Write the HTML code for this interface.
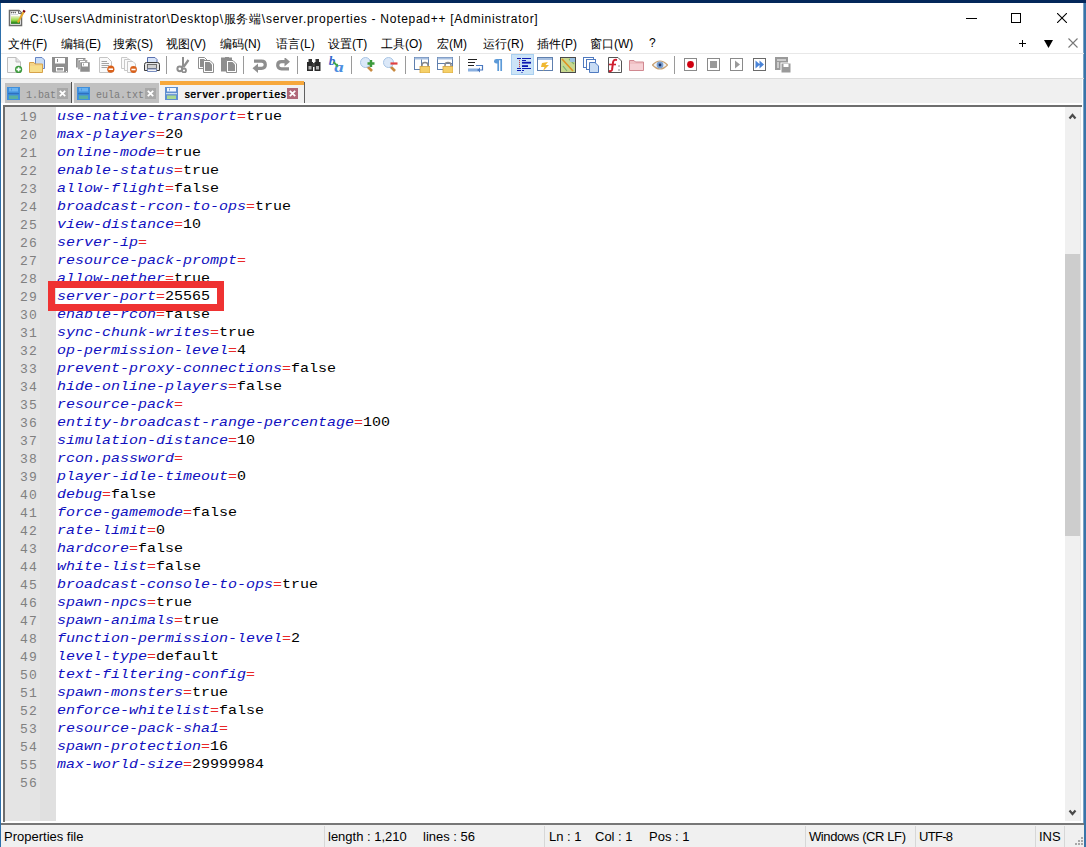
<!DOCTYPE html>
<html><head><meta charset="utf-8">
<style>
*{margin:0;padding:0;box-sizing:border-box}
html,body{width:1086px;height:847px;overflow:hidden;background:#fff;position:relative;font-family:"Liberation Sans",sans-serif}
.a{position:absolute}
.mi{position:absolute;top:36px;font-size:12px;color:#000;white-space:nowrap}
.ln{position:absolute;left:5px;width:33px;text-align:right;font-family:"Liberation Mono",monospace;font-size:13px;letter-spacing:1.2px;line-height:18px;height:18px;color:#808080}
.cl{position:absolute;left:57px;font-family:"Liberation Mono",monospace;font-size:15px;transform:scaleY(0.84);transform-origin:0 0;line-height:18px;height:18px;color:#000;white-space:pre}
.cl i{color:#1010c0;font-style:italic}
.cl b{color:#e82828;font-weight:normal}
.tt{position:absolute;top:90px;font-family:"Liberation Mono",monospace;font-size:10px;letter-spacing:0px;white-space:nowrap}
.st{position:absolute;top:829px;font-size:13px;color:#000;white-space:nowrap}
.sep{position:absolute;top:826px;width:1px;height:21px;background:#d7d7d7}
</style></head><body>
<!-- window frame -->
<div class="a" style="left:0;top:0;width:1086px;height:3px;background:#03275a"></div>
<div class="a" style="left:0;top:3px;width:1px;height:844px;background:#2d6fab"></div>
<div class="a" style="left:1083px;top:3px;width:1px;height:844px;background:#7aa2c6"></div><div class="a" style="left:1084px;top:3px;width:2px;height:844px;background:#3a74a8"></div>
<!-- title -->
<div class="a" id="title" style="left:30px;top:11px;font-size:12px;letter-spacing:0.72px;white-space:nowrap;color:#000">C:\Users\Administrator\Desktop\服务端\server.properties - Notepad++ [Administrator]</div>
<!-- menu -->
<div class="mi" style="left:8px">文件(F)</div><div class="mi" style="left:61px">编辑(E)</div><div class="mi" style="left:113px">搜索(S)</div><div class="mi" style="left:166px">视图(V)</div><div class="mi" style="left:220px">编码(N)</div><div class="mi" style="left:276px">语言(L)</div><div class="mi" style="left:328px">设置(T)</div><div class="mi" style="left:381px">工具(O)</div><div class="mi" style="left:437px">宏(M)</div><div class="mi" style="left:483px">运行(R)</div><div class="mi" style="left:537px">插件(P)</div><div class="mi" style="left:590px">窗口(W)</div><div class="mi" style="left:649px">?</div>
<div class="a" style="left:1px;top:53px;width:1083px;height:1px;background:#e8e8e8"></div>
<!-- toolbar -->
<div class="a" style="left:1px;top:78px;width:1083px;height:1px;background:#dcdcdc"></div>
<div class="a" style="left:1px;top:79px;width:1081px;height:24px;background:#f0f0f0"></div>
<!-- editor frame -->
<div class="a" style="left:3px;top:105px;width:1079px;height:2px;background:#6e6e6e"></div>
<div class="a" style="left:3px;top:105px;width:2px;height:717px;background:#6e6e6e"></div>
<div class="a" style="left:5px;top:107px;width:35px;height:714px;background:#e4e4e4"></div>
<div class="a" style="left:40px;top:107px;width:16px;height:714px;background:#e0e0e0"></div>
<!-- scrollbar -->
<div class="a" style="left:1065px;top:107px;width:16px;height:714px;background:#f0f0f0"></div>
<div class="a" style="left:1065px;top:254px;width:15px;height:282px;background:#cdcdcd"></div>
<div class="a" style="left:1080px;top:107px;width:1px;height:714px;background:#e6e6e6"></div>
<div class="ln" style="top:109px">19</div><div class="ln" style="top:127px">20</div><div class="ln" style="top:145px">21</div><div class="ln" style="top:163px">22</div><div class="ln" style="top:181px">23</div><div class="ln" style="top:199px">24</div><div class="ln" style="top:217px">25</div><div class="ln" style="top:235px">26</div><div class="ln" style="top:253px">27</div><div class="ln" style="top:271px">28</div><div class="ln" style="top:289px">29</div><div class="ln" style="top:307px">30</div><div class="ln" style="top:325px">31</div><div class="ln" style="top:343px">32</div><div class="ln" style="top:361px">33</div><div class="ln" style="top:379px">34</div><div class="ln" style="top:397px">35</div><div class="ln" style="top:415px">36</div><div class="ln" style="top:433px">37</div><div class="ln" style="top:451px">38</div><div class="ln" style="top:469px">39</div><div class="ln" style="top:487px">40</div><div class="ln" style="top:505px">41</div><div class="ln" style="top:523px">42</div><div class="ln" style="top:541px">43</div><div class="ln" style="top:559px">44</div><div class="ln" style="top:577px">45</div><div class="ln" style="top:595px">46</div><div class="ln" style="top:613px">47</div><div class="ln" style="top:631px">48</div><div class="ln" style="top:649px">49</div><div class="ln" style="top:667px">50</div><div class="ln" style="top:685px">51</div><div class="ln" style="top:703px">52</div><div class="ln" style="top:721px">53</div><div class="ln" style="top:739px">54</div><div class="ln" style="top:757px">55</div><div class="ln" style="top:775px">56</div>
<div class="cl" style="top:110px"><i>use-native-transport</i><b>=</b>true</div><div class="cl" style="top:128px"><i>max-players</i><b>=</b>20</div><div class="cl" style="top:146px"><i>online-mode</i><b>=</b>true</div><div class="cl" style="top:164px"><i>enable-status</i><b>=</b>true</div><div class="cl" style="top:182px"><i>allow-flight</i><b>=</b>false</div><div class="cl" style="top:200px"><i>broadcast-rcon-to-ops</i><b>=</b>true</div><div class="cl" style="top:218px"><i>view-distance</i><b>=</b>10</div><div class="cl" style="top:236px"><i>server-ip</i><b>=</b></div><div class="cl" style="top:254px"><i>resource-pack-prompt</i><b>=</b></div><div class="cl" style="top:272px"><i>allow-nether</i><b>=</b>true</div><div class="cl" style="top:290px"><i>server-port</i><b>=</b>25565</div><div class="cl" style="top:308px"><i>enable-rcon</i><b>=</b>false</div><div class="cl" style="top:326px"><i>sync-chunk-writes</i><b>=</b>true</div><div class="cl" style="top:344px"><i>op-permission-level</i><b>=</b>4</div><div class="cl" style="top:362px"><i>prevent-proxy-connections</i><b>=</b>false</div><div class="cl" style="top:380px"><i>hide-online-players</i><b>=</b>false</div><div class="cl" style="top:398px"><i>resource-pack</i><b>=</b></div><div class="cl" style="top:416px"><i>entity-broadcast-range-percentage</i><b>=</b>100</div><div class="cl" style="top:434px"><i>simulation-distance</i><b>=</b>10</div><div class="cl" style="top:452px"><i>rcon.password</i><b>=</b></div><div class="cl" style="top:470px"><i>player-idle-timeout</i><b>=</b>0</div><div class="cl" style="top:488px"><i>debug</i><b>=</b>false</div><div class="cl" style="top:506px"><i>force-gamemode</i><b>=</b>false</div><div class="cl" style="top:524px"><i>rate-limit</i><b>=</b>0</div><div class="cl" style="top:542px"><i>hardcore</i><b>=</b>false</div><div class="cl" style="top:560px"><i>white-list</i><b>=</b>false</div><div class="cl" style="top:578px"><i>broadcast-console-to-ops</i><b>=</b>true</div><div class="cl" style="top:596px"><i>spawn-npcs</i><b>=</b>true</div><div class="cl" style="top:614px"><i>spawn-animals</i><b>=</b>true</div><div class="cl" style="top:632px"><i>function-permission-level</i><b>=</b>2</div><div class="cl" style="top:650px"><i>level-type</i><b>=</b>default</div><div class="cl" style="top:668px"><i>text-filtering-config</i><b>=</b></div><div class="cl" style="top:686px"><i>spawn-monsters</i><b>=</b>true</div><div class="cl" style="top:704px"><i>enforce-whitelist</i><b>=</b>false</div><div class="cl" style="top:722px"><i>resource-pack-sha1</i><b>=</b></div><div class="cl" style="top:740px"><i>spawn-protection</i><b>=</b>16</div><div class="cl" style="top:758px"><i>max-world-size</i><b>=</b>29999984</div>
<!-- red box -->
<div class="a" style="left:48px;top:281px;width:176px;height:30px;border:7px solid #ef3232"></div>
<!-- status bar -->
<div class="a" style="left:1px;top:823px;width:1083px;height:2px;background:#777"></div>
<div class="a" style="left:1px;top:825px;width:1083px;height:22px;background:#f0f0f0"></div>
<div class="st" style="left:4px">Properties file</div>
<div class="sep" style="left:324px"></div>
<div class="st" style="left:328px">length : 1,210</div>
<div class="st" style="left:423px">lines : 56</div>
<div class="sep" style="left:544px"></div>
<div class="st" style="left:549px">Ln : 1</div>
<div class="st" style="left:595px">Col : 1</div>
<div class="st" style="left:649px">Pos : 1</div>
<div class="sep" style="left:805px"></div>
<div class="st" style="left:809px;letter-spacing:-0.4px">Windows (CR LF)</div>
<div class="sep" style="left:915px"></div>
<div class="st" style="left:919px;letter-spacing:-0.7px">UTF-8</div>
<div class="sep" style="left:1035px"></div>
<div class="st" style="left:1039px">INS</div>
<div class="sep" style="left:1064px"></div>

<!-- icons -->
<svg class="a" style="left:8px;top:9px" width="18" height="18" viewBox="0 0 18 18">
<path d="M1.5 1.5 H11 L13.5 4 V16.5 H1.5 Z" fill="#fff" stroke="#6a6a6a" stroke-width="1.5"/>
<path d="M10.5 1.5 V4.5 H13.5" fill="#dde4ee" stroke="#6a6a6a" stroke-width="1"/>
<circle cx="3.6" cy="3.6" r="0.8" fill="#666"/><circle cx="5.4" cy="3.6" r="0.8" fill="#666"/><circle cx="7.3" cy="3.6" r="0.8" fill="#666"/>
<rect x="3" y="5.2" width="7" height="0.8" fill="#c8d0d8"/>
<defs><linearGradient id="tg" x1="0" y1="0" x2="0" y2="1"><stop offset="0" stop-color="#f0f0d0"/><stop offset="0.55" stop-color="#98dc48"/><stop offset="1" stop-color="#0a6a0a"/></linearGradient></defs>
<rect x="3" y="6.8" width="9" height="8" fill="url(#tg)"/>
<path d="M15.8 2.8 L9.8 13.5" stroke="#e8a828" stroke-width="2"/>
<path d="M16.6 1.4 L15.6 3.2" stroke="#7a0010" stroke-width="2.4"/>
</svg><svg class="a" style="left:7px;top:57px" width="16" height="16" viewBox="0 0 16 16">
<path d="M0.5 0.5 H9 L13.5 5 V15.5 H0.5 Z" fill="#f8f8f8" stroke="#bdbdbd"/>
<path d="M9 0.5 V5 H13.5" fill="#e0e0e0" stroke="#bdbdbd"/>
<circle cx="11.6" cy="12.4" r="3.6" fill="#3e9a3e"/>
<path d="M11.6 10.2 V14.6 M9.4 12.4 H13.8" stroke="#fff" stroke-width="1.6"/>
</svg><svg class="a" style="left:29px;top:57px" width="16" height="16" viewBox="0 0 16 16">
<path d="M6.5 0.5 H13 L15.5 3 V11.5 H6.5 Z" fill="#c9ddf6" stroke="#6785c4"/>
<path d="M0.5 5.5 H5 L6 7 H13.5 V15.5 H0.5 Z" fill="#f3d48a" stroke="#d7a24a"/>
<rect x="1" y="9" width="12" height="6" fill="#f7de8c"/>
</svg><svg class="a" style="left:52px;top:57px" width="16" height="16" viewBox="0 0 16 16">
<path d="M0 0 H16 V15.5 H1 L0 14.5 Z" fill="#8e8e8e"/>
<rect x="3" y="1" width="10" height="5.5" fill="#fff"/>
<rect x="5" y="2" width="1" height="3" fill="#8e8e8e"/>
<rect x="4" y="10" width="8" height="4.5" fill="#fff"/>
<rect x="5" y="11" width="6" height="2.5" fill="#9a9a9a"/>
<rect x="14" y="14" width="1" height="1" fill="#fff"/>
</svg><svg class="a" style="left:76px;top:58px" width="16" height="16" viewBox="0 0 16 16">
<rect x="0" y="0" width="9.5" height="9.5" fill="#8e8e8e"/>
<rect x="2" y="1" width="5" height="1.2" fill="#fff"/><rect x="1.8" y="1" width="0.6" height="1.2" fill="#8e8e8e"/>
<rect x="2" y="2" width="9.5" height="9.5" fill="#8e8e8e" stroke="#fff" stroke-width="0.5"/>
<rect x="4" y="3" width="5" height="1.2" fill="#fff"/>
<rect x="4" y="4" width="10" height="10" fill="#8e8e8e" stroke="#fff" stroke-width="0.5"/>
<rect x="6" y="5" width="6" height="3.5" fill="#fff"/>
<rect x="7" y="5.5" width="0.8" height="2" fill="#8e8e8e"/>
</svg><svg class="a" style="left:99px;top:57px" width="16" height="16" viewBox="0 0 16 16">
<path d="M0.5 0.5 H8.5 L12.5 4.5 V15.5 H0.5 Z" fill="#fafafa" stroke="#c4c4c4"/>
<path d="M2.5 4.5 H8 M2.5 6.5 H10 M2.5 8.5 H10 M2.5 10.5 H8" stroke="#9a9a9a" stroke-width="0.9"/>
<circle cx="11.8" cy="12.2" r="3.6" fill="#d9601a"/>
<path d="M9.6 12.2 H14" stroke="#fff" stroke-width="1.6"/>
</svg><svg class="a" style="left:121px;top:57px" width="16" height="16" viewBox="0 0 16 16">
<path d="M0.5 0.5 H6 L8.5 3 V11.5 H0.5 Z" fill="#fafafa" stroke="#c8c8c8"/>
<path d="M3.5 2.5 H9 L11.5 5 V13.5 H3.5 Z" fill="#fafafa" stroke="#c8c8c8"/>
<path d="M6.5 4.5 H12 L14.5 7 V15.5 H6.5 Z" fill="#fafafa" stroke="#c8c8c8"/>
<circle cx="12.5" cy="12.5" r="3.4" fill="#d9601a"/>
<path d="M10.4 12.5 H14.6" stroke="#fff" stroke-width="1.6"/>
</svg><svg class="a" style="left:144px;top:57px" width="16" height="16" viewBox="0 0 16 16">
<path d="M3.5 0.5 H11 L13 2.5 V7 H3.5 Z" fill="#d8e4f8" stroke="#5a70b0"/>
<path d="M0.5 13.5 V7.5 Q0.5 5.5 2.5 5.5 H13.5 Q15.5 5.5 15.5 7.5 V13.5 Z" fill="#e4e4e4" stroke="#3c3c3c"/>
<rect x="3.5" y="7.5" width="9" height="4" fill="#d0d0d0" stroke="#555" stroke-width="0.8"/>
<path d="M3.5 12 H12.5 V14.5 H3.5 Z" fill="#f4f4f4" stroke="#6a80b8" stroke-width="0.9"/>
</svg><div class="a" style="left:166px;top:56px;width:1px;height:18px;background:#9a9a9a"></div><div class="a" style="left:243px;top:56px;width:1px;height:18px;background:#9a9a9a"></div><div class="a" style="left:297px;top:56px;width:1px;height:18px;background:#9a9a9a"></div><div class="a" style="left:351px;top:56px;width:1px;height:18px;background:#9a9a9a"></div><div class="a" style="left:405px;top:56px;width:1px;height:18px;background:#9a9a9a"></div><div class="a" style="left:459px;top:56px;width:1px;height:18px;background:#9a9a9a"></div><div class="a" style="left:674px;top:56px;width:1px;height:18px;background:#9a9a9a"></div><svg class="a" style="left:176px;top:57px" width="16" height="16" viewBox="0 0 16 16">
<path d="M7 0 V10" stroke="#8e8e8e" stroke-width="2"/>
<path d="M12.5 3 L7.5 10" stroke="#8e8e8e" stroke-width="2.2"/>
<circle cx="3.8" cy="11.8" r="2.4" fill="none" stroke="#8e8e8e" stroke-width="2"/>
<circle cx="8" cy="13.5" r="2" fill="none" stroke="#8e8e8e" stroke-width="1.8"/>
<path d="M5 10.5 L7.5 9" stroke="#8e8e8e" stroke-width="2.4"/>
</svg><svg class="a" style="left:198px;top:57px" width="16" height="16" viewBox="0 0 16 16">
<path d="M0.5 0.5 H6.5 L10 4 V11.5 H0.5 Z" fill="#fff" stroke="#8e8e8e"/>
<path d="M2 2 H6 L8.5 4.5 V10 H2 Z" fill="#8e8e8e"/>
<path d="M5.5 3.5 H12 L15.5 7 V15.5 H5.5 Z" fill="#fff" stroke="#8e8e8e"/>
<path d="M7 5 H11.5 L14 7.5 V14 H7 Z" fill="#8e8e8e"/>
</svg><svg class="a" style="left:221px;top:57px" width="16" height="16" viewBox="0 0 16 16">
<path d="M0 0.5 H4 V0 H8 V0.5 H11 V14.5 H0 Z" fill="#8e8e8e"/>
<path d="M5.5 3.5 H12 L15.5 7 V15.5 H5.5 Z" fill="#fff" stroke="#8e8e8e"/>
<path d="M7 5 H11.5 L14 7.5 V14 H7 Z" fill="#8e8e8e"/>
</svg><svg class="a" style="left:252px;top:58px" width="16" height="16" viewBox="0 0 16 16">
<path d="M2 3.2 H9.5 Q13.3 3.2 13.3 6.8 Q13.3 10.3 9.5 10.3 H5" fill="none" stroke="#8e8e8e" stroke-width="3.2"/>
<path d="M0.5 10.3 L6 5.5 V15 Z" fill="#8e8e8e"/>
</svg><svg class="a" style="left:275px;top:58px" width="16" height="16" viewBox="0 0 16 16">
<path d="M14 10.8 H6.5 Q2.7 10.8 2.7 7.2 Q2.7 3.7 6.5 3.7 H11" fill="none" stroke="#8e8e8e" stroke-width="3.2"/>
<path d="M15 3.7 L9.5 -1 V8.5 Z" fill="#8e8e8e"/>
</svg><svg class="a" style="left:307px;top:58px" width="14" height="14" viewBox="0 0 14 14">
<rect x="1.5" y="1" width="3.5" height="4" fill="#333"/>
<rect x="8.5" y="1" width="3.5" height="4" fill="#333"/>
<rect x="0" y="4" width="6" height="9" fill="#2a2a2a"/>
<rect x="7.5" y="4" width="6" height="9" fill="#2a2a2a"/>
<rect x="5.5" y="5" width="2.5" height="4" fill="#444"/>
<rect x="1.5" y="8" width="3" height="3.5" fill="#b0b0b0"/>
<rect x="9" y="8" width="3" height="3.5" fill="#b0b0b0"/>
</svg><svg class="a" style="left:328px;top:56px" width="17" height="17" viewBox="0 0 17 17">
<text x="0.8" y="8.6" font-family="Liberation Serif" font-style="italic" font-weight="bold" font-size="12" fill="#3466cc" transform="scale(1.1,1)">b</text>
<text x="4.6" y="16.2" font-family="Liberation Serif" font-style="italic" font-weight="bold" font-size="14" fill="#4a8ee0" transform="scale(1.35,1)">a</text>
<path d="M5.5 6 L9 9.5" stroke="#40a848" stroke-width="1.8"/>
<path d="M10.2 10.8 L10 7.5 L7 10.5 Z" fill="#40a848"/>
</svg><svg class="a" style="left:360px;top:57px" width="15" height="15" viewBox="0 0 15 15">
<path d="M7 9 L12 14" stroke="#c88a40" stroke-width="2.6"/>
<circle cx="5.5" cy="5.5" r="5" fill="#dbe8f8" stroke="#a8c4e4"/>
<path d="M11 3 V10 M7.5 6.5 H14.5" stroke="#3c9a3c" stroke-width="2.4"/>
</svg><svg class="a" style="left:383px;top:57px" width="15" height="15" viewBox="0 0 15 15">
<path d="M7 9 L12 14" stroke="#c88a40" stroke-width="2.6"/>
<circle cx="5.5" cy="5.5" r="5" fill="#dbe8f8" stroke="#a8c4e4"/>
<path d="M7.5 6.5 H14.5" stroke="#e04040" stroke-width="2.2"/>
</svg><svg class="a" style="left:414px;top:57px" width="16" height="16" viewBox="0 0 16 16">
<rect x="0.5" y="0.5" width="14" height="12" fill="#fff" stroke="#5e7fae"/>
<rect x="0.5" y="0.5" width="14" height="2" fill="#a8c0e0"/>
<path d="M7.5 2.5 V12.5" stroke="#5e7fae"/>
<path d="M8 10 V8 Q8 5.5 11 5.5 Q14 5.5 14 8 V10" fill="none" stroke="#8a8a8a" stroke-width="1.5"/>
<rect x="6" y="9.5" width="10" height="6.5" fill="#f5d068" stroke="#d4a440" stroke-width="0.8"/>
</svg><svg class="a" style="left:437px;top:57px" width="16" height="16" viewBox="0 0 16 16">
<rect x="0.5" y="0.5" width="15" height="12" fill="#fff" stroke="#5e7fae"/>
<rect x="0.5" y="0.5" width="15" height="2" fill="#a8c0e0"/>
<path d="M0.5 6.5 H15.5" stroke="#5e7fae"/>
<path d="M8 10 V8 Q8 5.5 11 5.5 Q14 5.5 14 8 V10" fill="none" stroke="#8a8a8a" stroke-width="1.5"/>
<rect x="6" y="9.5" width="10" height="6.5" fill="#f5d068" stroke="#d4a440" stroke-width="0.8"/>
</svg><svg class="a" style="left:468px;top:59px" width="16" height="14" viewBox="0 0 16 14">
<path d="M0 0.5 H9 M0 3.5 H7 M0 6.5 H6" stroke="#222" stroke-width="1"/>
<rect x="0" y="9.5" width="10" height="3" fill="#8ab0e0"/>
<path d="M8 6.5 H14.5 V11 H10" fill="none" stroke="#4a78c0" stroke-width="1.2"/>
<path d="M9 11 L12 8.5 V13.5 Z" fill="#4a78c0"/>
</svg><svg class="a" style="left:494px;top:59px" width="9" height="12" viewBox="0 0 9 12">
<path d="M4.2 0.5 H8 M4.2 0.5 V12 M7.2 0.5 V12" stroke="#5c9ad8" stroke-width="1.7" fill="none"/>
<path d="M4.5 0 H2.5 Q0 0 0 2.2 Q0 4.5 2.5 4.5 H4.5 Z" fill="#5c9ad8"/>
</svg><div class="a" style="left:511px;top:54px;width:23px;height:21px;background:#cce4f7;border:1px solid #a8cff0"></div><svg class="a" style="left:516px;top:57px" width="16" height="16" viewBox="0 0 16 16">
<g fill="#0a18b0">
<rect x="1" y="1" width="4" height="1"/><rect x="6" y="1" width="9" height="1"/>
<rect x="6" y="3" width="4" height="1"/>
<rect x="6" y="4.8" width="9" height="1.8"/>
<rect x="6" y="8.2" width="6" height="1.8"/>
<rect x="1" y="11" width="4" height="1"/><rect x="6" y="11" width="9" height="1"/>
<rect x="1" y="13" width="4" height="1"/><rect x="6" y="13" width="2" height="1"/>
<rect x="5.5" y="15" width="1" height="1"/>
</g>
<g fill="#c03030"><rect x="3" y="3.2" width="1" height="1"/><rect x="3" y="5.2" width="1" height="1"/><rect x="3" y="7.2" width="1" height="1"/><rect x="3" y="9.2" width="1" height="1"/></g>
</svg><svg class="a" style="left:537px;top:57px" width="16" height="15" viewBox="0 0 16 15">
<rect x="0.5" y="0.5" width="15" height="13" fill="#fff" stroke="#5e7fae"/>
<rect x="1" y="1" width="14" height="2" fill="#a8c0e0"/>
<path d="M5 6 L11 5 L8.5 8 L12 8 L6 14 L7.5 10 L4 10 Z" fill="#f0b830"/>
</svg><svg class="a" style="left:560px;top:57px" width="16" height="16" viewBox="0 0 16 16">
<rect x="0.5" y="0.5" width="15" height="15" fill="#c8d890" stroke="#4a4a4a"/>
<path d="M2 2 L13 14" stroke="#e09020" stroke-width="1.6"/>
<path d="M9 2 L14 7 M3 9 L7 14" stroke="#7ab070" stroke-width="1.2"/>
<rect x="10" y="1" width="5" height="4" fill="#9ac0e0"/>
</svg><svg class="a" style="left:583px;top:57px" width="16" height="16" viewBox="0 0 16 16">
<rect x="0.5" y="0.5" width="10" height="10" fill="#fff" stroke="#4f7ac0"/>
<rect x="3.5" y="2.5" width="9" height="10" fill="#fff" stroke="#4f7ac0"/>
<path d="M6.5 5.5 H12 L15.5 9 V15.5 H6.5 Z" fill="#c8dcf4" stroke="#4f7ac0"/>
</svg><svg class="a" style="left:606px;top:57px" width="16" height="16" viewBox="0 0 16 16">
<path d="M2.5 0.5 H12 L15.5 4 V15.5 H2.5 Z" fill="#fff" stroke="#555"/>
<path d="M11 3 Q7 2 7 6 L6 13 Q5.5 14.5 3 14" fill="none" stroke="#d02030" stroke-width="2"/>
<path d="M3 7.5 H10" stroke="#d02030" stroke-width="1.6"/>
<path d="M13 8 V10 M13 12 V14" stroke="#888" stroke-width="1"/>
</svg><svg class="a" style="left:629px;top:59px" width="15" height="12" viewBox="0 0 15 12">
<path d="M0.5 1.5 H5 L6.5 3 H14.5 V11.5 H0.5 Z" fill="#f0c0c4" stroke="#d08890"/>
<rect x="1" y="5" width="13" height="6" fill="#f6d0d4"/>
</svg><svg class="a" style="left:652px;top:59px" width="16" height="12" viewBox="0 0 16 12">
<path d="M0.5 6 Q8 -2 15.5 6 Q8 14 0.5 6 Z" fill="#eef2f8" stroke="#c8a070" stroke-width="1.2"/>
<circle cx="8" cy="6" r="3.4" fill="#7aa0d0"/>
<circle cx="8" cy="6" r="1.4" fill="#203060"/>
</svg><svg class="a" style="left:684px;top:58px" width="13" height="13" viewBox="0 0 13 13">
<rect x="0.5" y="0.5" width="12" height="12" fill="#fff" stroke="#8a8a8a"/>
<circle cx="6.5" cy="6.5" r="3.4" fill="#d00010"/>
</svg><svg class="a" style="left:707px;top:58px" width="13" height="13" viewBox="0 0 13 13">
<rect x="0.5" y="0.5" width="12" height="12" fill="#fff" stroke="#8a8a8a"/>
<rect x="3" y="3" width="7" height="7" fill="#9a9a9a"/>
</svg><svg class="a" style="left:730px;top:58px" width="13" height="13" viewBox="0 0 13 13">
<rect x="0.5" y="0.5" width="12" height="12" fill="#fff" stroke="#8a8a8a"/>
<path d="M5 2.5 L10 6.5 L5 10.5 Z" fill="#9a9a9a"/>
</svg><svg class="a" style="left:753px;top:58px" width="13" height="13" viewBox="0 0 13 13">
<rect x="0.5" y="0.5" width="12" height="12" fill="#fff" stroke="#6a6a6a"/>
<path d="M2.5 2.5 L7 6.5 L2.5 10.5 Z M6.5 2.5 L11 6.5 L6.5 10.5 Z" fill="#4a84d8"/>
</svg><svg class="a" style="left:775px;top:57px" width="16" height="16" viewBox="0 0 16 16">
<rect x="0" y="0" width="13" height="13" fill="#9a9a9a"/>
<path d="M2 3 H11" stroke="#fff" stroke-width="1"/>
<path d="M2 6 H4 M2 8 H4 M2 10 H4" stroke="#fff" stroke-width="1"/>
<rect x="6" y="6" width="10" height="10" fill="#9a9a9a" stroke="#fff" stroke-width="1"/>
<rect x="8.5" y="7" width="5" height="3" fill="#fff"/>
</svg>
<!-- title buttons -->
<div class="a" style="left:966px;top:18px;width:11px;height:1px;background:#000"></div>
<div class="a" style="left:1011px;top:13px;width:10px;height:10px;border:1px solid #000"></div>
<svg class="a" style="left:1057px;top:13px" width="10" height="10" viewBox="0 0 10 10"><path d="M0 0 L10 10 M10 0 L0 10" stroke="#000" stroke-width="1.1"/></svg>
<!-- menu right -->
<svg class="a" style="left:1019px;top:40px" width="7" height="7" viewBox="0 0 7 7"><path d="M3.5 0 V7 M0 3.5 H7" stroke="#000" stroke-width="1"/></svg>
<svg class="a" style="left:1044px;top:40px" width="9" height="8" viewBox="0 0 9 8"><path d="M0 0 H9 L4.5 8 Z" fill="#000"/></svg>
<svg class="a" style="left:1068px;top:38px" width="10" height="10" viewBox="0 0 10 10"><path d="M0.5 0.5 L9.5 9.5 M9.5 0.5 L0.5 9.5" stroke="#777" stroke-width="1.1"/></svg>
<!-- tabs -->
<div class="a" style="left:5px;top:83px;width:66px;height:20px;background:#c0c0c0"></div>
<div class="a" style="left:71px;top:82px;width:1px;height:21px;background:#505050"></div>
<div class="a" style="left:74px;top:83px;width:85px;height:20px;background:#c0c0c0"></div>
<div class="a" style="left:160px;top:81px;width:144px;height:22px;background:#f2f2f2"></div>
<div class="a" style="left:160px;top:81px;width:144px;height:4px;background:#f7a83c"></div>
<div class="a" style="left:304px;top:82px;width:1px;height:21px;background:#606060"></div>
<div class="a" style="left:1px;top:103px;width:1081px;height:2px;background:#fff"></div>
<svg class="a" style="left:7px;top:87px" width="13" height="13" viewBox="0 0 13 13"><rect x="0" y="0" width="13" height="13" fill="#3f8fdc"/>
<rect x="2" y="1" width="9" height="3.5" fill="#6ab2f0"/>
<rect x="1" y="6" width="11" height="1.2" fill="#2f70c0"/>
<rect x="2" y="8.5" width="9" height="3.5" fill="#58b0a0"/>
<rect x="4" y="1.5" width="0.8" height="2" fill="#3f8fdc"/></svg><svg class="a" style="left:77px;top:87px" width="13" height="13" viewBox="0 0 13 13"><rect x="0" y="0" width="13" height="13" fill="#3f8fdc"/>
<rect x="2" y="1" width="9" height="3.5" fill="#6ab2f0"/>
<rect x="1" y="6" width="11" height="1.2" fill="#2f70c0"/>
<rect x="2" y="8.5" width="9" height="3.5" fill="#58b0a0"/>
<rect x="4" y="1.5" width="0.8" height="2" fill="#3f8fdc"/></svg><svg class="a" style="left:165px;top:87px" width="13" height="13" viewBox="0 0 13 13"><rect x="0" y="0" width="13" height="13" fill="#5f8fd0"/>
<rect x="2" y="1" width="9" height="3.5" fill="#f4f8ff"/>
<rect x="1" y="6" width="11" height="1.2" fill="#c8dcf0"/>
<rect x="2" y="8.5" width="9" height="3.5" fill="#a8d890"/>
<rect x="4" y="1.5" width="0.8" height="2" fill="#5f8fd0"/></svg><div class="a" style="left:57px;top:88px;width:11px;height:11px;background:#a8a8a8"></div><svg class="a" style="left:59px;top:90px" width="7" height="7" viewBox="0 0 7 7"><path d="M0.8 0.8 L6.2 6.2 M6.2 0.8 L0.8 6.2" stroke="#fff" stroke-width="1.8"/></svg><div class="a" style="left:145px;top:88px;width:11px;height:11px;background:#a8a8a8"></div><svg class="a" style="left:147px;top:90px" width="7" height="7" viewBox="0 0 7 7"><path d="M0.8 0.8 L6.2 6.2 M6.2 0.8 L0.8 6.2" stroke="#fff" stroke-width="1.8"/></svg><div class="a" style="left:287px;top:88px;width:11px;height:11px;background:#b06878"></div><svg class="a" style="left:289px;top:90px" width="7" height="7" viewBox="0 0 7 7"><path d="M0.8 0.8 L6.2 6.2 M6.2 0.8 L0.8 6.2" stroke="#fff" stroke-width="1.8"/></svg>
<div class="tt" style="left:26px;color:#7c7c7c">1.bat</div>
<div class="tt" style="left:96px;color:#7c7c7c">eula.txt</div>
<div class="tt" style="left:184px;color:#000;text-shadow:0.6px 0 0 #000">server.properties</div>
<!-- scroll arrows -->
<svg class="a" style="left:1068px;top:112px" width="9" height="8" viewBox="0 0 9 8"><path d="M1.5 6.5 L4.5 3 L7.5 6.5" fill="none" stroke="#4a4a4a" stroke-width="2.2"/></svg>
<svg class="a" style="left:1068px;top:809px" width="9" height="8" viewBox="0 0 9 8"><path d="M1.5 1.5 L4.5 5 L7.5 1.5" fill="none" stroke="#4a4a4a" stroke-width="2.2"/></svg>
<!-- grip -->
<svg class="a" style="left:1074px;top:837px" width="10" height="10" viewBox="0 0 10 10"><g fill="#a8a8a8"><rect x="7" y="0" width="2" height="2"/><rect x="4" y="3" width="2" height="2"/><rect x="7" y="3" width="2" height="2"/><rect x="1" y="6" width="2" height="2"/><rect x="4" y="6" width="2" height="2"/><rect x="7" y="6" width="2" height="2"/></g></svg>
</body></html>
